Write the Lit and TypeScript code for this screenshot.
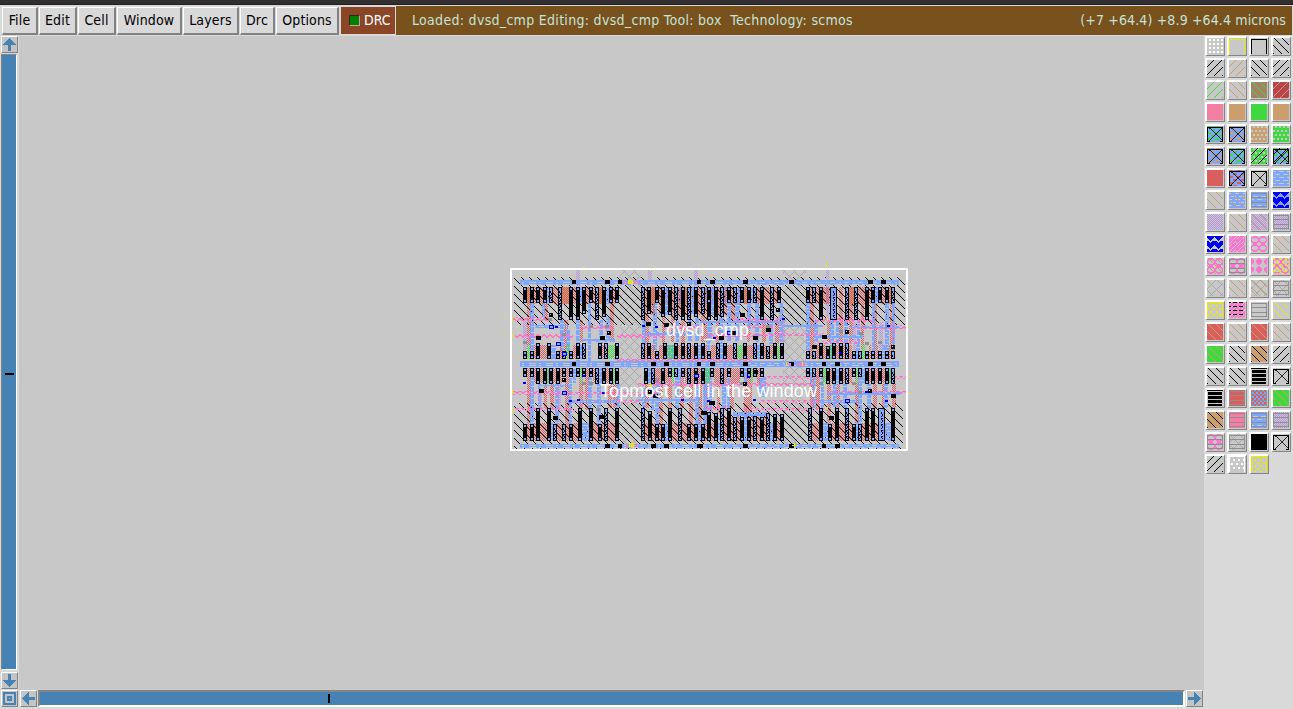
import { LitElement, html, svg, css } from "lit";
import { customElement } from "lit/decorators.js";

// Stipple tiles: [id, colour, rows]
const tiles: [string, string, string[]][] = [];
const tile = (id: string, color: string, rows: string) => tiles.push([id, color, rows.split("/")]);

const BACK = "01000000/00100000/00010000/00001000/00000100/00000010/00000001/10000000";
const FWD = "00000010/00000100/00001000/00010000/00100000/01000000/10000000/00000001";
const CHECK = "10/01";
const ODD = "01/10";
const BRICK = "11111111/00011100/11111111/11111111/11000001/11111111";
const DASH = "11110000/11110000/00000000/00001111/00001111/00000000";
const RINGS = "00111100/01111110/11000011/10000001/10000001/11000011/01111110/00111100";
const TRI = "11111111/11111110/01111100/00111000/00010000/11000111/11101111/11111111";
const LATTICE = "1000000010/0100000100/0010001000/0001010000/0000100000/0001010000/0010001000/0100000100/1000000010/0000000001";
tile("bk", "#000", BACK);
tile("fk", "#000", FWD);
tile("bt", "#cb9e6e", BACK);
tile("ft", "#cb9e6e", FWD);
tile("fg", "#3fd83f", FWD);
tile("bg", "#3fd83f", BACK);
tile("by", "#eaea00", BACK);
tile("cr", "#d95f5f", CHECK);
tile("cz", "#d95f5f", "0110/0110/1001/1001");
tile("cg", "#3fd83f", CHECK);
tile("cp", "#b795e0", CHECK);
tile("cq", "#b795e0", ODD);
tile("ct", "#cb9e6e", ODD);
tile("blue", "#7da7ff", BRICK);
tile("dg", "#3fd83f", DASH);
tile("dt", "#cb9e6e", DASH);
tile("dr", "#d95f5f", DASH);
tile("pk", "#ff73d0", RINGS);
tile("px", "#ff73d0", "11011110/10111101/01111011/11110111/11101111/11011101/10111011/01110110");
tile("pt", "#ff73d0", "10000001/11000011/11100111/11100111/11100111/11000011/10000001/00000000");
tile("tb", "#0000f0", TRI);
tile("lt", "#a9a9a9", LATTICE);
tile("dots", "#c8c8c8", "01100000/01100110/00000110/00000000");
tile("dy", "#eaea00", "110000/110000/000000/000110/000110/000000");
tile("kd", "#000", "110011/000000/000000/000000");
tile("zig", "#ff73c8", "001100/011110/110011/100001");

const pattern = ([id, color, rows]: [string, string, string[]]) => {
  let d = "";
  rows.forEach((r, y) => [...r].forEach((c, x) => { if (c === "1") d += `M${x} ${y}h1v1h-1z`; }));
  return svg`<pattern id=${id} width=${rows[0].length} height=${rows.length} patternUnits="userSpaceOnUse"><path d=${d} fill=${color} shape-rendering="crispEdges"/></pattern>`;
};
const defs = () => svg`<defs>${tiles.map(pattern)}</defs>`;

// Solid fills used by the palette
const solid: Record<string, string> = {
  PINK: "#f47fa5", TAN: "#cb9e6e", GREEN: "#3fd83f", RED: "#d95f5f", BLUE: "#7da7ff",
  BROWN: "#a38363", CRIM: "#b9444c", BLACK: "#000",
};

const palette = (
  "DW,YBOX,KBOX,bk|fk,ft,bk,fk|fg,bt,BROWN bg,CRIM ft|PINK,TAN,GREEN,TAN|" +
  "BLUE dg X,BLUE dt X,TAN DOTS,GREEN DOTS|BLUE dt X,BLUE dg X,GREEN DOTS fk,BLUE dg X fk|" +
  "RED,BLUE dr X,X,blue|bt,blue bt,blue BARS,BLUE tb|cp,bt,cp bt,cp BARS|" +
  "tb,px,pk,bt|pk bt,pk BARS,pt,pk dy|lt,bt,lt bt,lt BARS|YEDGE dy,px kd,BARS,by|" +
  "RED bt,bt,RED bt,bt|GREEN bt,bk,TAN bk,fk|bk,bk,KBARS,X|" +
  "KBARS,RED BARS,BLUE cz BARS,GREEN bt|TAN bk,PINK BARS,blue BARS,cp BARS|" +
  "pk BARS,lt BARS,BLACK,X|fk,WDOT,YEDGE dy"
).split("|").flatMap((r) => r.split(","));

const layer = (k: string) => {
  if (solid[k]) return svg`<rect width="16" height="16" fill=${solid[k]}/>`;
  switch (k) {
    case "X": return svg`<path d="M.5 16V1.5H15.5V16M0 15.5H3M13 15.5H16" stroke="#000" fill="none"/><path d="M1.5 14.5L14.5 2M1.5 2L14.5 14.5" stroke="#000" stroke-width=".8" fill="none"/>`;
    case "YBOX": return svg`<path d="M.5 16V1.5H15.5V16" stroke="#ecec00" fill="none"/>`;
    case "KBOX": return svg`<path d="M.5 16V1.5H15.5V16" stroke="#000" fill="none"/>`;
    case "YEDGE": return svg`<path d="M.5 16V.5H15.5V16" stroke="#eaea00" fill="none"/>`;
    case "BARS": return svg`<path d="M.5 1V15M15.5 1V15M0 1.5H16M0 5.5H16M0 10.5H16M0 14.5H16" stroke="#8e8e8e" fill="none"/>`;
    case "KBARS": return svg`<path d="M0 .5H16" stroke="#000"/><path d="M1 3.5H15M1 7.5H15M1 11.5H15M1 15H15" stroke="#000" stroke-width="3"/>`;
    case "DW": return svg`<path d="M2 2H16M2 6H16M2 10H16M2 14H16" stroke="#fff" stroke-width="2" stroke-dasharray="2 2"/>`;
    case "DOTS": return svg`<path d="M2 1H16M0 5H16M2 9H16M0 13H16" stroke="#c8c8c8" stroke-width="2" stroke-dasharray="2 2"/>`;
    case "WDOT": return svg`<path d="M.5 0V16M15.5 0V16M0 .5H16" stroke="#fff"/><path d="M4 4H15M2 8H15M4 12H15" stroke="#fff" stroke-width="2" stroke-dasharray="2 3"/>`;
  }
  return svg`<rect width="16" height="16" fill="url(#${k})"/>`;
};

// Cell geometry, three units per pixel; a negative extent marks an outlined device.
const R = 585;
const Y2 = 279;
const rowA: [number, number][] = [
  [55,123],[74,123],[93,123],[113,123],[133,-123],[160,-173],[192,173],[212,173],[232,157],[252,123],[271,-173],[291,165],[312,123],[331,123],
  [409,-173],[427,157],[449,123],[468,165],[488,158],[508,-173],[528,173],[547,-173],[567,165],[587,-157],[607,173],
  [R+22,123],[R+42,173],[R+61,-165],[R+81,123],[R+100,-123],[R+120,123],[R+140,123],[R+159,-123],[R+181,173],[R+211,-173],[R+231,123],
  [R+318,123],[R+337,-123],[R+357,173],[R+391,-173],[R+436,-173],[R+462,-173],[R+495,173],[R+514,123],[R+534,123],[R+555,123],[R+573,-123],
];
const rowB: [number, number][] = [
  [55,267],[74,267],[93,243],[126,243],[153,267],[172,-267],[192,267],[212,243],[232,-243],[279,243],[298,-243],[331,243],
  [409,-243],[427,243],[449,267],[474,243],[508,243],[528,243],[547,-243],[567,243],[587,243],
  [R+3,243],[R+22,267],[R+48,-243],[R+68,243],[R+100,-243],[R+129,243],[R+160,-243],[R+180,243],[R+198,-252],[R+219,243],[R+240,243],
  [R+318,267],[R+337,-267],[R+357,243],[R+377,252],[R+396,243],[R+417,243],[R+436,-243],[R+456,267],[R+475,-267],[R+495,267],[R+514,267],[R+534,267],[R+555,267],[R+573,-267],
];
const rowC: [number, number][] = [
  [55,65],[74,65],[93,88],[113,88],[133,88],[153,88],[172,65],[192,65],[212,65],[232,65],[252,65],[271,-88],[291,88],[312,88],[331,88],
  [417,88],[437,-88],[468,88],[488,65],[508,-65],[528,65],[547,-88],[567,88],
  [R+3,88],[R+30,65],[R+61,-88],[R+81,65],[R+120,65],[R+140,65],[R+159,65],[R+181,65],
  [R+318,65],[R+337,-65],[R+357,65],[R+377,88],[R+396,88],[R+417,88],[R+436,-88],[R+456,65],[R+475,-65],[R+495,88],[R+514,88],[R+534,88],[R+555,88],[R+573,-88],
];
const rowD: [number, number][] = [
  [55,208],[74,208],[93,160],[126,160],[145,-208],[172,-208],[192,208],[219,160],[252,160],[279,208],[298,-160],[331,160],
  [409,-160],[429,168],[449,208],[468,208],[488,160],[520,-160],[547,208],[567,208],[587,208],[607,170],
  [R+22,170],[R+42,175],[R+61,-160],[R+81,160],[R+100,-187],[R+120,187],[R+140,187],[R+159,-183],[R+180,187],[R+198,-175],[R+219,177],[R+240,177],
  [R+325,-160],[R+357,160],[R+385,208],[R+405,160],[R+436,-160],[R+456,208],[R+475,-208],[R+495,160],[R+514,160],[R+535,-160],[R+573,160],
];
const px = (u: number) => Math.round(u / 3);

const box = (u0: number, v0: number, u1: number, v1: number, fill: string) =>
  svg`<rect x=${px(u0)} y=${px(v0)} width=${px(u1) - px(u0)} height=${px(v1) - px(v0)} fill=${fill}/>`;

const device = (u: number, top: number, bottom: number, open: boolean) => {
  const x = px(u), y = px(top), h = px(bottom) - y, w = u === R + 391 || u === R + 535 ? 7 : 4;
  return svg`<rect x=${x} y=${y} width=${w} height=${h} fill="#000"/>
    ${open ? svg`<rect x=${x + 1} y=${y + 1} width=${w - 2} height=${h - 2} fill="#7da7ff"/>
      <path d="M${x + (w > 4 ? 3.5 : 1.5)} ${y + 4}V${y + h - 2}M${x + (w > 4 ? 4.5 : 2.5)} ${y + 6}V${y + h - 2}" stroke="#000" stroke-dasharray="2 2 1 1"/>`
      : svg`<path d="M${x + 1} ${y + 2}h2M${x + 1} ${y + h - 2}h2" stroke="#7da7ff" stroke-width="1.4"/>`}`;
};

// Polysilicon in the gaps between neighbouring devices
const gaps = (row: [number, number][], top: number, bottom: number, off: number) =>
  row.slice(0, -1).map(([u], i) => {
    const next = row[i + 1][0], w = next - u - 12;
    if (w > 30) return "";
    const green = (i * 7 + top) % 5 === 0 && off !== 1;
    return [
      box(u + 12, top, next, bottom, i % 4 === 3 ? "url(#blue)" : "url(#cr)"),
      green ? box(u + 12, top, next, bottom, off === 2 ? "url(#cg)" : "url(#ct)") : "",
    ];
  });

// Vertical routes: [u, from, to, paint]
const routes: [number, number, number, string][] = [];
[[66,123,290],[118,123,178],[178,173,270],[224,173,240],[316,123,240],[421,157,290],[470,165,250],[497,158,240],[528,173,250],[588,157,240],
 [R+10,165,240],[R+48,173,245],[R+94,123,175],[R+140,123,240],[R+186,173,240],[R+225,173,245],[R+330,123,290],[R+380,173,240],[R+418,75,240],[R+448,75,240],[R+482,75,260],[R+520,123,290],[R+570,123,270]].forEach(([u,a,b]) => routes.push([u,a,b,"url(#cr)"]));
[[76,123,270],[110,123,165],[166,173,268],[184,200,268],[213,173,300],[248,123,300],[282,173,245],[303,165,240],[412,173,245],[444,123,270],[512,173,240],[550,173,240],[571,165,240],[609,173,240],
 [R+20,123,270],[R+58,165,245],[R+82,123,240],[R+105,123,240],[R+142,123,200],[R+166,123,240],[R+207,173,245],[R+238,123,240],[R+318,123,268],[R+343,173,240],[R+390,173,252],[R+407,173,244],[R+432,173,244],[R+470,173,268],[R+515,123,268],[R+555,123,268],[R+575,123,268]].forEach(([u,a,b]) => routes.push([u,a,b,"url(#blue)"]));
[[66,65,208],[116,88,160],[136,88,160],[180,65,208],[222,65,160],[240,65,165],[310,88,160],[325,88,160],[420,88,160],[462,65,208],[490,65,160],[525,65,160],[552,88,208],[580,88,208],
 [R+12,88,208],[R+50,65,175],[R+90,65,160],[R+132,65,187],[R+145,65,187],[R+330,65,160],[R+349,65,160],[R+382,88,208],[R+408,88,160],[R+465,65,208],[R+520,88,160],[R+545,88,160],[R+577,88,160]].forEach(([u,a,b]) => routes.push([u,a+Y2,b+Y2,"url(#cr)"]));
[[76,65,208],[98,88,160],[150,88,208],[191,65,208],[250,65,160],[276,88,208],[335,88,160],[410,100,160],[437,88,168],[450,65,208],[511,65,160],[570,88,208],[595,88,208],
 [R+26,65,170],[R+66,88,160],[R+80,65,160],[R+176,65,125],[R+186,65,125],[R+338,65,160],[R+362,65,160],[R+400,88,160],[R+430,88,160],[R+475,65,208],[R+502,88,160],[R+552,88,160]].forEach(([u,a,b]) => routes.push([u,a+Y2,b+Y2,"url(#blue)"]));
[[213,24,75],[430,24,75],[568,24,75],[55,175,265],[R+377,22,180],[R+243,165,240],[R+538,180,265],[R+575,180,240],[156,Y2+85,Y2+165],[100,Y2+110,Y2+160],[R+458,180,265]].forEach(([u,a,b]) => routes.push([u,a,b,"url(#cq)"]));

// Horizontal wiring: [u0, u1, v, paint, thickness]
const wires: [number, number, number, string, number][] = [
  [20,145,165,"zig",12],[30,205,215,"zig",12],[230,324,190,"zig",12],[335,480,215,"zig",12],[R+100,R+240,168,"zig",12],
  [R+345,R+520,168,"zig",12],[R+20,R+170,212,"zig",12],[R+460,R+625,190,"zig",12],[R+170,R+375,212,"zig",9],[R+345,R+480,238,"zig",9],
  [20,145,Y2+108,"zig",12],[145,460,Y2+111,"zig",9],[30,210,Y2+158,"zig",9],[200,410,Y2+134,"zig",9],[400,600,Y2+85,"zig",9],[R,R+340,Y2+84,"zig",9],
  [R+190,R+375,Y2+62,"zig",9],[R+500,R+625,Y2+62,"zig",9],[R+180,R+435,Y2+134,"zig",9],[R+380,R+625,Y2+108,"zig",9],[R+20,R+90,Y2+156,"zig",12],[R+130,R+380,Y2+158,"zig",9],
  [330,520,Y2+12,"zig",9],[520,R+155,Y2+12,"zig",12],[R+340,R+590,Y2+5,"zig",6],[480,590,193,"zig",9],[R+140,R+220,190,"zig",9],
  [90,190,188,"blue",9],[230,330,230,"blue",9],[410,560,210,"blue",9],[R+248,R+370,189,"#7da7ff",6],[R+350,R+490,218,"blue",9],[R+450,R+600,192,"blue",6],
  [R,R+250,178,"blue",6],[100,200,Y2+90,"blue",6],[185,340,Y2+135,"blue",9],[400,585,Y2+133,"blue",9],[R+100,R+200,Y2+170,"blue",15],[R+380,R+600,Y2+110,"blue",9],[R+360,R+470,Y2+134,"blue",9],
];
const ports: [number, number][] = [[133,190],[153,240],[172,270],[R+80,208],[R+436,Y2+132],[172,Y2+109],[567,Y2+58]];
const blueDots: [number, number][] = [[R+495,Y2+108],[232,Y2+60],[410,190],[R+40,226],[R+417,270],[192,Y2+135],[290,Y2+112],[430,Y2+112],[R+160,Y2+133],[R+22,Y2+134],[R+140,Y2+62],[215,Y2+133],[528,Y2+133],[55,Y2+82],[R+555,Y2+135],[150,193],[450,193],[R+245,168],[R+560,190]];
const blobs: [number, number][] = [[133,154],[93,223],[285,223],[306,208],[422,180],[478,182],[546,180],[R+57,223],[R+159,223],[R+228,139],[R+120,154],[R+198,199],[R+436,203],[R+366,218],[R+335,250],[R+573,248],[R+97,208],
  [102,Y2+102],[172,Y2+70],[145,Y2+182],[282,Y2+180],[430,Y2+104],[445,Y2+118],[590,Y2+168],[612,Y2+138],[R+3,Y2+168],[R+30,Y2+138],[R+130,Y2+82],[R+160,Y2+45],[R+387,Y2+182],[R+505,Y2+102],[R+573,Y2+118]];
const greys: [number, number][] = [[130,168],[172,212],[55,237],[252,190],[300,190],[R+197,188],[R+417,205],[R+476,210],[R+495,240],[R+533,238],[R+555,190],[230,Y2+82],[252,Y2+82],[272,Y2+158],[R+357,Y2+82],[R+456,Y2+82],[R+475,Y2+108],[R+120,Y2+82],[R+436,Y2+132]];
const railA = [200,300,338,575,615,R+30,R+130,R+267,R+505,R+543];
const railM = [200,300,438,477,575,615,R+130,R+267,R+365,R+405,R+505,R+543];
const railD = [300,338,438,477,575,R-5,R+130,R+267,R+365,R+405];

const layout = () => svg`
  <g transform="translate(505 262)" shape-rendering="crispEdges">
    ${box(27,45,R+616,188,"url(#bk)")}${box(27,Y2+143,R+610,Y2+281,"url(#bk)")}
    ${box(345,25,409,Y2+281,"url(#lt)")}${box(R+250,25,R+318,Y2+281,"url(#lt)")}
    ${routes.map(([u,a,b,p]) => box(u,a,u + 11,b,p))}
    ${wires.map(([a,b,v,p,t]) => box(a,v,b,v + t,p[0] === "#" ? p : `url(#${p})`))}
    ${gaps(rowA,75,125,0)}${gaps(rowB,250,291,2)}${gaps(rowC,Y2+40,Y2+85,2)}${gaps(rowD,Y2+205,Y2+257,1)}
    ${gaps(rowA.slice(14,31),75,160,1)}${gaps(rowD.slice(24,32),Y2+185,Y2+250,1)}
    ${box(45,53,R+596,68,"#7da7ff")}${box(45,Y2+18,R+596,Y2+35,"#7da7ff")}${box(45,Y2+266,R+596,Y2+278,"#7da7ff")}
    <path d="M17 20.5H213M17 22.5H392M17 101.5H213M17 103.5H392M17 183.5H213M17 185.5H392" stroke="#c8c8c8" stroke-dasharray="2 5 7 3"/>
    <path d="M213 20.5H392M213 101.5H392M213 183.5H392" stroke="#c8c8c8" stroke-dasharray="5 4 2 3"/>
    <path d="M16 18.5H392M18 182.5H392" stroke="#3fd83f" stroke-dasharray="1 11 2 23"/>
    <path d="M16 99.5H392" stroke="#cb9e6e" stroke-dasharray="2 12"/>
    ${rowA.map(([u,b]) => device(u,75,Math.abs(b),b < 0))}
    ${rowB.map(([u,t]) => device(u,Math.abs(t),291,t < 0))}
    ${rowC.map(([u,b]) => device(u,Y2+40,Y2+Math.abs(b),b < 0))}
    ${rowD.map(([u,t]) => device(u,Y2+Math.abs(t),Y2+257,t < 0))}
    ${greys.map(([u,v]) => svg`<rect x=${px(u)} y=${px(v)} width="4" height="3" fill="#909090"/>`)}
    ${blueDots.map(([u,v]) => svg`<rect x=${px(u)} y=${px(v)} width="3" height="2" fill="#0000e8"/>`)}
    ${ports.map(([u,v]) => svg`<rect x=${px(u) + .5} y=${px(v) + .5} width="4" height="3" fill="#7da7ff" stroke="#0000e8"/>`)}
    ${blobs.map(([u,v], i) => svg`<rect x=${px(u)} y=${px(v)} width=${i % 3 ? 5 : 4} height="4" fill="#000"/>${i % 3 ? "" : svg`<rect x=${px(u) + 1} y=${px(v) + 1} width="1" height="1" fill="#c8c8c8"/>`}`)}
    ${railA.map((u) => box(u,54,u + 14,66,"#000"))}
    ${railM.map((u) => box(u,Y2+21,u + 14,Y2+33,"#000"))}
    ${railD.map((u) => box(u,Y2+266,u + 14,Y2+278,"#000"))}
    <path d="M118 20h4M129 20h5M121 183h12M284 102h3M292 102h8" stroke="#ff73c8" stroke-width="3" stroke-dasharray="2 1"/>
    <path d="M123.5 18.5h4v3h-4zM124 181.5h4v3h-4z" stroke="#eaea00" fill="#d8d840"/>
    <path d="M79.5 5v4M145.5 5v4M197.5 5v4M321.5 1v4M7.5 55v4M7.5 72v4M7.5 128v4M7.5 147v4M0 55.5h1M0 72.5h1M0 147.5h1M0 128.5h1M404 65.5h2M404 114.5h2M404 131.5h2M322.5 56v3M322.5 145v3M289.5 181v4M287 183.5h5M142 123.5h6M145.5 121v5M281.5 100v3M297.5 100v3" stroke="#eaea00"/>
    <rect x="6" y="7" width="396" height="181" fill="none" stroke="#fff" stroke-width="2"/>
  </g>
  <g fill="#fff" font-family="Liberation Sans" font-size="18">
    <text x="666" y="336" textLength="83">dvsd_cmp</text>
    <text x="600" y="397" textLength="217">Topmost cell in the window</text>
  </g>`;

const arrow = (deg: number) => html`<svg width="13" height="13" viewBox="0 0 13 13" shape-rendering="crispEdges"><path transform="rotate(${deg} 6.5 6.5)" d="M6 0h1v1h1v1h1v1h1v1h1v1h1v1h1v1H8v6H5V7H0V6h1V5h1V4h1V3h1V2h1V1h1z" fill="#4682b4"/></svg>`;

@customElement("app-root")
export class AppRoot extends LitElement {
  static styles = css`
    :host { display: grid; grid-template-rows: 5px 31px 654px 19px; width: 1293px; height: 709px; overflow: hidden; background: #d9d9d9; font: 14px "DejaVu Sans Condensed", "DejaVu Sans", sans-serif; font-stretch: condensed; }
    * { box-sizing: border-box; }
    svg { display: block; }
    .frame { background: #322f30; border-bottom: 1px solid #211e1f; }
    .bar { display: flex; padding: 1px 1px 1px 2px; }
    .menu { height: 28px; margin: 1px 1px 0 0; border: solid; border-width: 1px 2px 2px 1px; border-color: #fff #828282 #828282 #fff; line-height: 24px; text-align: center; color: #000; white-space: nowrap; letter-spacing: .15px; }
    .drc { display: flex; align-items: center; gap: 4px; width: 56px; height: 29px; padding: 0 0 1px 8px; border: 1px solid #d9d9d9; background: #8b4628; color: #fff; }
    .led { width: 11px; height: 11px; background: #008000; border: 1px solid; border-color: #3b2412 #c4a494 #c4a494 #3b2412; }
    .status { flex: 1; height: 29px; display: flex; justify-content: space-between; padding: 0 6px 0 16px; background: #78511d; color: #c5e3d8; line-height: 28px; white-space: pre; }
    .message { letter-spacing: .3px; }
    .coords { letter-spacing: .13px; }
    .main { display: grid; grid-template-columns: 19px 1185px 89px; }
    .side { display: flex; flex-direction: column; align-items: center; gap: 1px; padding-right: 1px; }
    .btn { display: grid; place-items: center; flex: none; width: 17px; height: 17px; background: #c4c4c4; border: 1px solid; border-color: #fff #828282 #828282 #fff; }
    .vtrack { display: flex; flex: none; align-items: center; justify-content: center; width: 16px; height: 616px; margin-bottom: 1px; background: #4682b4; border: 1px solid; border-color: #858585 #fff #fff #858585; }
    .vmark { width: 9px; height: 2px; margin-top: 23px; background: #000; }
    .canvas { background: #c8c8c8; }
    .palette { display: grid; grid-template-columns: repeat(4, 20px); grid-auto-rows: 20px; gap: 2px; align-content: start; padding-left: 1px; }
    .swatch { width: 20px; height: 20px; background: #c8c8c8; border: solid; border-width: 2px 1px 1px 2px; border-color: #fff #858585 #858585 #fff; }
    .bottom { display: flex; align-items: center; padding: 0 0 2px 1px; }
    .corner { margin-right: 2px; }
    .htrack { display: flex; align-items: center; width: 1147px; height: 17px; margin: 0 1px 0 1px; background: #4682b4; border: 2px solid; border-color: #858585 #fff #fff #858585; }
    .hmark { width: 2px; height: 9px; margin-left: 288px; background: #000; }
  `;

  private menus: [string, number][] = [["File", 36], ["Edit", 38], ["Cell", 38], ["Window", 65], ["Layers", 56], ["Drc", 35], ["Options", 63]];

  render() {
    return html`
      <div class="frame"></div>
      <div class="bar">
        ${this.menus.map(([name, w]) => html`<div class="menu" style="width:${w}px">${name}</div>`)}
        <div class="drc"><span class="led"></span>DRC</div>
        <div class="status"><span class="message">Loaded: dvsd_cmp Editing: dvsd_cmp Tool: box  Technology: scmos</span><span class="coords">(+7 +64.4) +8.9 +64.4 microns</span></div>
      </div>
      <div class="main">
        <div class="side">
          <div class="btn">${arrow(0)}</div>
          <div class="vtrack"><div class="vmark"></div></div>
          <div class="btn">${arrow(180)}</div>
        </div>
        <svg class="canvas" width="1185" height="654" viewBox="19 36 1185 654">${defs()}${layout()}</svg>
        <div class="palette">
          ${palette.map((s) => html`<div class="swatch"><svg width="16" height="16" shape-rendering="crispEdges">${s.split(" ").map(layer)}</svg></div>`)}
        </div>
      </div>
      <div class="bottom">
        <div class="btn corner"><svg width="13" height="13" fill="none" stroke="#4682b4" stroke-width="2" shape-rendering="crispEdges"><path d="M1 1h11v11H1zM5 5h3v3H5z"/></svg></div>
        <div class="btn">${arrow(270)}</div>
        <div class="htrack"><div class="hmark"></div></div>
        <div class="btn">${arrow(90)}</div>
      </div>`;
  }
}
